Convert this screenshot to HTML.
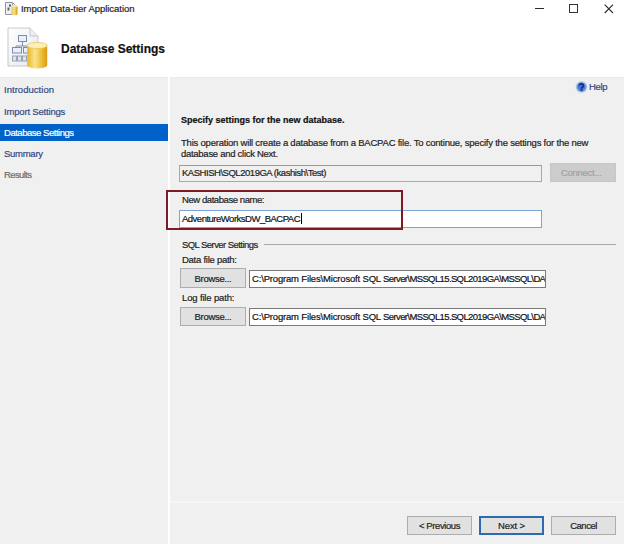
<!DOCTYPE html>
<html><head><meta charset="utf-8">
<style>
*{margin:0;padding:0;box-sizing:border-box}
html,body{width:624px;height:544px;overflow:hidden;background:#f0f0f0;font-family:"Liberation Sans",sans-serif;font-size:9.5px;line-height:11px;color:#1e1e1e;-webkit-text-stroke:0.2px currentColor}
.a{position:absolute;white-space:nowrap}
.nav{left:4px;color:#324a84}
.tb{background:#fff;border:1px solid #7a7a7a}
.btn{background:#e1e1e1;border:1px solid #adadad;text-align:center;color:#1e1e1e}
</style></head><body>
<div class="a" style="left:0;top:0;width:624px;height:77px;background:#fff"></div>
<!-- title bar -->
<svg class="a" style="left:0;top:0" width="20" height="18" viewBox="0 0 20 18">
 <defs><linearGradient id="sc" x1="0" y1="0" x2="1" y2="0"><stop offset="0" stop-color="#e9c24a"/><stop offset="0.45" stop-color="#f7e08a"/><stop offset="1" stop-color="#d49a10"/></linearGradient></defs>
 <path d="M5.5 2.5h7l3.5 3.5v8.5h-10.5z" fill="#eef0f4" stroke="#8d95a3" stroke-width="1"/>
 <path d="M12.5 2.5v3.5h3.5" fill="none" stroke="#8d95a3" stroke-width="0.8"/>
 <rect x="9" y="4.5" width="2" height="2" fill="#4a5468"/>
 <rect x="7.5" y="7.5" width="2" height="3" fill="#5a6478"/>
 <path d="M11.5 6v8a3 1.2 0 0 0 6 0v-8z" fill="url(#sc)"/>
 <ellipse cx="14.5" cy="6" rx="3" ry="1.1" fill="#fbeaa8"/>
</svg>
<div class="a" style="left:21px;top:3px;letter-spacing:-0.04px">Import Data-tier Application</div>
<div class="a" style="left:535px;top:8px;width:9px;height:1px;background:#2a2a2a"></div>
<div class="a" style="left:569px;top:4px;width:9px;height:9px;border:1px solid #333"></div>
<svg class="a" style="left:604px;top:4px" width="10" height="10" viewBox="0 0 10 10"><path d="M0.7 0.7L9 9M9 0.7L0.7 9" stroke="#2a2a2a" stroke-width="1.1"/></svg>

<!-- header icon -->
<svg class="a" style="left:6px;top:26px" width="44" height="46" viewBox="0 0 44 46">
 <defs>
  <linearGradient id="doc" x1="0" y1="0" x2="1" y2="1"><stop offset="0" stop-color="#ffffff"/><stop offset="1" stop-color="#e6e8ec"/></linearGradient>
  <linearGradient id="cyl" x1="0" y1="0" x2="1" y2="0"><stop offset="0" stop-color="#e8b526"/><stop offset="0.38" stop-color="#f9e48a"/><stop offset="0.7" stop-color="#efc03c"/><stop offset="1" stop-color="#d99a12"/></linearGradient>
 </defs>
 <path d="M2 2h22l8 8v30H2z" fill="url(#doc)" stroke="#c4c8d0" stroke-width="1"/>
 <path d="M24 2v8h8" fill="#eceef2" stroke="#c4c8d0" stroke-width="1"/>
 <rect x="12.5" y="9.5" width="8" height="6" fill="#e8f0fb" stroke="#7d8ca8"/>
 <path d="M16.5 16v4M10 20h12M10 20v2M22 20v2" stroke="#7d8ca8" stroke-width="1" fill="none"/>
 <rect x="6.5" y="21.5" width="9" height="5.5" fill="#e8f0fb" stroke="#7d8ca8"/>
 <rect x="17.5" y="21.5" width="6" height="5.5" fill="#e8f0fb" stroke="#7d8ca8"/>
 <rect x="6.5" y="30" width="4" height="5" fill="#dfe4ec" stroke="#9aa3b4"/>
 <rect x="11.5" y="30" width="4" height="5" fill="#dfe4ec" stroke="#9aa3b4"/>
 <rect x="16.5" y="30" width="4" height="5" fill="#dfe4ec" stroke="#9aa3b4"/>
 <path d="M21.2 19.5v19.8a10 3.1 0 0 0 20 0v-19.8z" fill="url(#cyl)"/>
 <ellipse cx="31.2" cy="19.5" rx="10" ry="3.1" fill="#fcf0b8" stroke="#e8c050" stroke-width="0.7"/>
</svg>
<div class="a" style="left:61px;top:43px;font-size:12px;line-height:13px;font-weight:bold;color:#111">Database Settings</div>

<!-- nav -->
<div class="a" style="left:0;top:124px;width:168px;height:17px;background:#0062c9"></div>
<div class="a nav" style="top:84px;letter-spacing:0.03px">Introduction</div>
<div class="a nav" style="top:106px;letter-spacing:-0.18px">Import Settings</div>
<div class="a nav" style="top:127px;letter-spacing:-0.47px;color:#fff">Database Settings</div>
<div class="a nav" style="top:148px;letter-spacing:-0.27px">Summary</div>
<div class="a nav" style="top:169px;letter-spacing:-0.6px;color:#6d6d6d">Results</div>
<div class="a" style="left:0;top:77px;width:624px;height:1px;background:#ebebeb"></div>
<div class="a" style="left:168px;top:77px;width:2px;height:467px;background:#fff"></div>

<!-- help -->
<svg class="a" style="left:575px;top:81px" width="13" height="13" viewBox="0 0 13 13">
 <defs><radialGradient id="hg" cx="0.5" cy="0.5" r="0.5"><stop offset="0" stop-color="#3a70d8"/><stop offset="0.55" stop-color="#4a7ad0"/><stop offset="0.8" stop-color="#9ab4e4"/><stop offset="1" stop-color="#d0dcf2"/></radialGradient></defs>
 <circle cx="6.5" cy="6" r="6" fill="url(#hg)"/>
 <path d="M4.2 4.6a2.1 1.9 0 1 1 3.4 1.5c-0.9 0.5-1.1 0.9-1.1 1.7" stroke="#102a78" stroke-width="1.6" fill="none"/>
 <rect x="5.6" y="8.4" width="1.8" height="1.6" fill="#102a78"/>
</svg>
<div class="a" style="left:589px;top:81px;color:#2f4580;letter-spacing:-0.3px">Help</div>

<!-- content -->
<div class="a" style="left:181px;top:115px;font-size:9px;font-weight:bold;color:#111">Specify settings for the new database.</div>
<div class="a" style="left:181px;top:137px;letter-spacing:-0.216px">This operation will create a database from a BACPAC file. To continue, specify the settings for the new</div>
<div class="a" style="left:181px;top:148px;letter-spacing:-0.28px">database and click Next.</div>
<div class="a" style="left:179px;top:165px;width:363px;height:17px;background:#f0f0f0;border:1px solid #a8a8a8;border-top-color:#999"></div>
<div class="a" style="left:182px;top:167px;letter-spacing:-0.47px">KASHISH\SQL2019GA (kashish\Test)</div>
<div class="a" style="left:550px;top:163px;width:66px;height:19px;background:#cccccc;border:1px solid #c6c6c6"></div>
<div class="a" style="left:561px;top:167px;color:#a2a2a2;letter-spacing:-0.28px">Connect...</div>

<div class="a" style="left:182px;top:194px;letter-spacing:-0.43px">New database name:</div>
<div class="a tb" style="left:179px;top:210px;width:363px;height:18px;border-color:#7aa5d6"></div>
<div class="a" style="left:182px;top:213px;letter-spacing:-0.5px;color:#111">AdventureWorksDW_BACPAC</div>
<div class="a" style="left:301px;top:213px;width:1px;height:11px;background:#000"></div>
<div class="a" style="left:166px;top:190px;width:237px;height:40px;border:2px solid #7e1a21"></div>

<div class="a" style="left:182px;top:239px;letter-spacing:-0.56px">SQL Server Settings</div>
<div class="a" style="left:264px;top:244px;width:352px;height:1px;background:#a8a8a8"></div>
<div class="a" style="left:182px;top:254px;letter-spacing:-0.26px">Data file path:</div>
<div class="a btn" style="left:180px;top:268px;width:66px;height:20px;line-height:19px;letter-spacing:-0.3px">Browse...</div>
<div class="a tb" style="left:249px;top:270px;width:297px;height:18px;overflow:hidden;padding-left:2px;line-height:15px;letter-spacing:-0.17px;color:#111">C:\Program Files\Microsoft SQL <span style="letter-spacing:-0.62px">Server\MSSQL15.SQL2019GA\MSSQL\DATA\</span></div>
<div class="a" style="left:182px;top:292px;letter-spacing:-0.15px">Log file path:</div>
<div class="a btn" style="left:180px;top:307px;width:66px;height:19px;line-height:18px;letter-spacing:-0.3px">Browse...</div>
<div class="a tb" style="left:249px;top:308px;width:297px;height:18px;overflow:hidden;padding-left:2px;line-height:15px;letter-spacing:-0.17px;color:#111">C:\Program Files\Microsoft SQL <span style="letter-spacing:-0.62px">Server\MSSQL15.SQL2019GA\MSSQL\DATA\</span></div>

<!-- bottom -->
<div class="a" style="left:170px;top:501px;width:454px;height:2px;background:#f7f7f7"></div>
<div class="a btn" style="left:407px;top:516px;width:65px;height:19px;line-height:17px;letter-spacing:-0.42px">&lt; Previous</div>
<div class="a btn" style="left:479px;top:516px;width:65px;height:19px;line-height:15px;border:2px solid #2f6ab0;letter-spacing:-0.1px">Next &gt;</div>
<div class="a btn" style="left:551px;top:516px;width:65px;height:19px;line-height:17px;letter-spacing:-0.5px">Cancel</div>
</body></html>
